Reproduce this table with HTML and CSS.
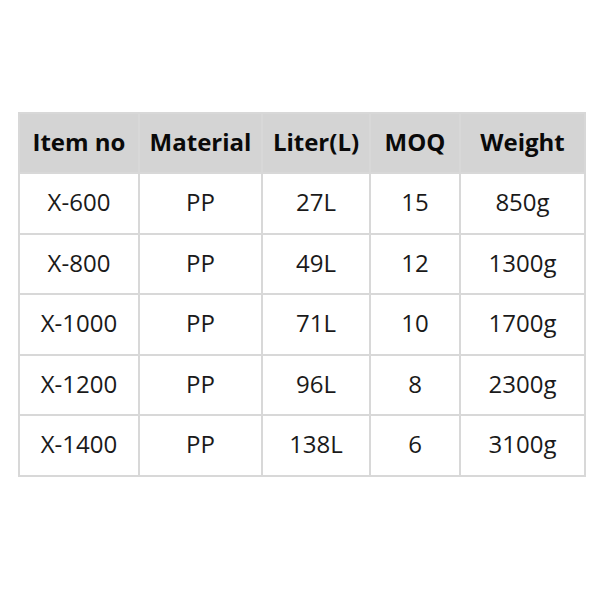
FILE: index.html
```html
<!DOCTYPE html>
<html>
<head>
<meta charset="utf-8">
<link rel="stylesheet" href="styles.css">
</head>
<body>
<div class="page">
<table class="spec">
<colgroup>
<col class="c1"><col class="c2"><col class="c3"><col class="c4"><col class="c5">
</colgroup>
<thead>
<tr><th>Item no</th><th>Material</th><th>Liter(L)</th><th>MOQ</th><th>Weight</th></tr>
</thead>
<tbody>
<tr><td>X-600</td><td>PP</td><td>27L</td><td>15</td><td>850g</td></tr>
<tr><td>X-800</td><td>PP</td><td>49L</td><td>12</td><td>1300g</td></tr>
<tr><td>X-1000</td><td>PP</td><td>71L</td><td>10</td><td>1700g</td></tr>
<tr><td>X-1200</td><td>PP</td><td>96L</td><td>8</td><td>2300g</td></tr>
<tr><td>X-1400</td><td>PP</td><td>138L</td><td>6</td><td>3100g</td></tr>
</tbody>
</table>
</div>
</body>
</html>
```
FILE: styles.css
```css
html, body {
  margin: 0;
  padding: 0;
  background: #ffffff;
}
.page {
  width: 600px;
  height: 600px;
  padding-top: 112px;
  padding-left: 18px;
  box-sizing: border-box;
}
.spec {
  border-collapse: collapse;
  table-layout: fixed;
  width: 566px;
  font-family: "Open Sans", "Noto Sans", sans-serif;
  font-size: 24px;
  color: #1a1a1a;
}
.c1 { width: 120px; }
.c2 { width: 123px; }
.c3 { width: 108px; }
.c4 { width: 90px; }
.c5 { width: 125px; }
.spec th, .spec td {
  border: 2px solid #d8d8d8;
  text-align: center;
  padding: 0 0 3px 0;
  box-sizing: border-box;
}
.spec th {
  background: #d4d4d4;
  color: #0a0a0a;
  font-weight: 700;
  height: 60px;
}
.spec td {
  height: 60.5px;
}
```
